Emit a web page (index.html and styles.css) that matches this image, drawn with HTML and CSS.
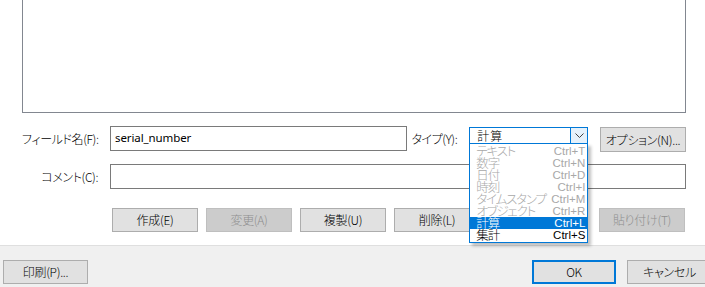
FILE: index.html
```html
<!DOCTYPE html>
<html lang="ja">
<head>
<meta charset="utf-8">
<title>フィールドの管理</title>
<link rel="stylesheet" href="styles.css">
</head>
<body>
<div class="dialog">
  <div class="main">
    <div class="listbox"></div>

    <div class="row row-field">
      <label class="lbl">フィールド名(F):</label>
      <div class="input input-name">serial_number</div>
      <label class="lbl-type">タイプ(Y):</label>
      <div class="combo">
        <div class="combo-box">
          <span class="combo-text">計算</span>
          <span class="combo-arrow">
            <svg width="9" height="5" viewBox="0 0 9 5"><path d="M0.5 0.5 L4.5 4.5 L8.5 0.5" fill="none" stroke="#404040" stroke-width="1"/></svg>
          </span>
        </div>
        <ul class="droplist">
          <li class="item dis"><span class="name">テキスト</span><span class="key">Ctrl+T</span></li>
          <li class="item dis"><span class="name">数字</span><span class="key">Ctrl+N</span></li>
          <li class="item dis"><span class="name">日付</span><span class="key">Ctrl+D</span></li>
          <li class="item dis"><span class="name">時刻</span><span class="key">Ctrl+I</span></li>
          <li class="item dis"><span class="name">タイムスタンプ</span><span class="key">Ctrl+M</span></li>
          <li class="item dis"><span class="name">オブジェクト</span><span class="key">Ctrl+R</span></li>
          <li class="item sel"><span class="name">計算</span><span class="key">Ctrl+L</span></li>
          <li class="item"><span class="name">集計</span><span class="key">Ctrl+S</span></li>
        </ul>
      </div>
      <button class="btn btn-opt">オプション(N)...</button>
    </div>

    <div class="row row-comment">
      <label class="lbl">コメント(C):</label>
      <div class="input input-comment"></div>
    </div>

    <div class="row row-buttons">
      <button class="btn">作成(E)</button>
      <button class="btn disabled">変更(A)</button>
      <button class="btn">複製(U)</button>
      <button class="btn">削除(L)</button>
      <button class="btn">コピー(O)</button>
      <button class="btn disabled push">貼り付け(T)</button>
    </div>
  </div>

  <div class="footer">
    <button class="btn btn-print">印刷(P)...</button>
    <button class="btn btn-ok">OK</button>
    <button class="btn btn-cancel">キャンセル</button>
  </div>
</div>
</body>
</html>
```

FILE: styles.css
```css
html, body {
  margin: 0;
  padding: 0;
  width: 705px;
  height: 287px;
  overflow: hidden;
  background: #f0f0f0;
}

.dialog {
  width: 705px;
  height: 287px;
  font-family: "Noto Sans CJK JP", "Noto Sans", sans-serif;
  font-size: 12px;
  font-weight: 300;
  font-feature-settings: "palt";
  letter-spacing: -0.4px;
  color: #000;
  display: flex;
  flex-direction: column;
}

.main {
  height: 245px;
  background: #ffffff;
  padding: 0 19px 0 22px;
  box-sizing: border-box;
}

.listbox {
  height: 113px;
  border: 1px solid #828790;
  border-top: none;
  box-sizing: border-box;
  background: #fff;
}

.row {
  display: flex;
  align-items: center;
}

.row-field {
  margin-top: 13px;
  height: 25px;
}

.row-comment {
  margin-top: 13px;
  height: 25px;
}

.row-buttons {
  margin-top: 19px;
  padding-left: 90px;
  gap: 8px;
}

.lbl {
  width: 88px;
  padding-right: 12px;
  box-sizing: border-box;
  text-align: right;
  white-space: nowrap;
  line-height: 14px;
}

.input {
  height: 25px;
  border: 1px solid #7a7a7a;
  box-sizing: border-box;
  background: #fff;
  padding-left: 4px;
  line-height: 22px;
  font-family: "Noto Sans", "Noto Sans CJK JP", sans-serif;
  font-size: 11.5px;
  font-weight: 400;
  letter-spacing: -0.1px;
}

.input-name {
  width: 298px;
}

.input-comment {
  width: 576px;
}

.lbl-type {
  width: 62px;
  padding-left: 4px;
  box-sizing: border-box;
  white-space: nowrap;
}

.combo {
  position: relative;
  width: 119px;
  height: 17px;
  align-self: flex-start;
  margin-top: 1px;
}

.combo-box {
  height: 17px;
  border: 1px solid #0078d7;
  box-sizing: border-box;
  background: #fff;
  display: flex;
  align-items: center;
}

.combo-text {
  flex: 1;
  padding-left: 7px;
  line-height: 15px;
  letter-spacing: 1px;
}

.combo-arrow {
  width: 17px;
  height: 15px;
  background: #e5f1fb;
  border-left: 1px solid #0078d7;
  box-sizing: border-box;
  display: flex;
  align-items: center;
  justify-content: center;
}

.droplist {
  position: absolute;
  left: 0;
  top: 16px;
  width: 119px;
  margin: 0;
  padding: 1px 0;
  list-style: none;
  background: #fff;
  border: 1px solid #0078d7;
  box-sizing: border-box;
  box-shadow: 3px 3px 3px rgba(0, 0, 0, 0.25);
  z-index: 10;
}

.item {
  height: 12px;
  line-height: 12px;
  display: flex;
  justify-content: space-between;
  padding: 0 2px 0 6px;
  white-space: nowrap;
}

.item .name {
  font-size: 12.5px;
  letter-spacing: -1.2px;
}

.item .key {
  font-family: "Liberation Sans", "Noto Sans", sans-serif;
  font-size: 11.5px;
  letter-spacing: 0;
}

.item.dis {
  color: #a8a8a8;
}

.item.sel {
  background: #0078d7;
  color: #fff;
}

.btn {
  font-family: inherit;
  font-size: 12px;
  font-weight: 300;
  font-feature-settings: "palt";
  letter-spacing: -0.3px;
  color: #000;
  width: 86px;
  height: 24px;
  padding: 0;
  margin: 0;
  background: #e1e1e1;
  border: 1px solid #adadad;
  box-sizing: border-box;
  white-space: nowrap;
  line-height: 20px;
}

.btn.disabled {
  background: #cccccc;
  border-color: #bfbfbf;
  color: #8f8f8f;
}

.btn.push {
  margin-left: auto;
  margin-right: 1px;
}

.btn-opt {
  margin-left: 12px;
  height: 25px;
  align-self: flex-start;
  margin-top: 1px;
}

.footer {
  height: 42px;
  border-top: 1px solid #dfdfdf;
  box-sizing: border-box;
  background: #f0f0f0;
  display: flex;
  align-items: flex-start;
  padding: 14px 0 0 3px;
}

.btn-print {
  width: 85px;
}

.btn-ok {
  margin-left: auto;
  width: 84px;
  border: 2px solid #0078d7;
}

.btn-cancel {
  width: 85px;
  margin-left: 11px;
  margin-right: -7px;
  flex-shrink: 0;
}
```
